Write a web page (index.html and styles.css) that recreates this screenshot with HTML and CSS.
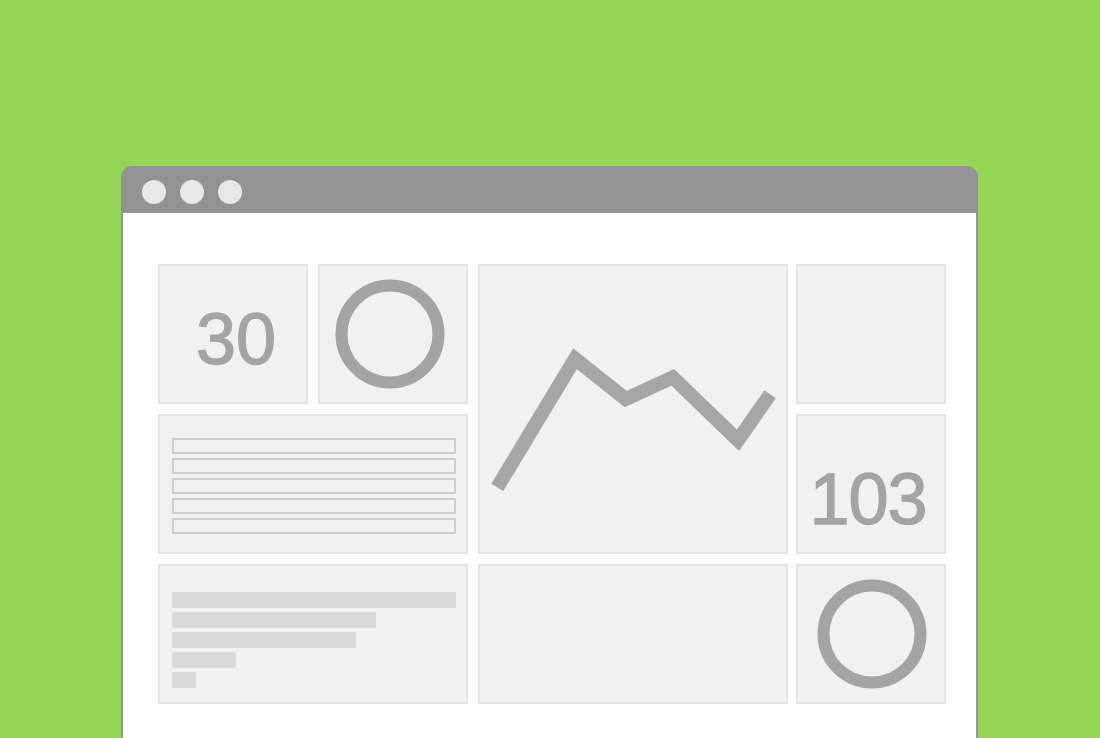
FILE: index.html
```html
<!DOCTYPE html>
<html>
<head>
<meta charset="utf-8">
<link rel="stylesheet" href="styles.css">
</head>
<body>
<div class="window">
  <div class="titlebar">
    <span class="dot"></span><span class="dot"></span><span class="dot"></span>
  </div>
  <div class="content">
    <div class="grid">
      <div class="cell stat stat-30"><span>30</span></div>
      <div class="cell ring-cell ring-a">
        <svg width="112" height="112" viewBox="0 0 112 112"><circle cx="56" cy="56" r="48.5" fill="none" stroke="#a4a4a4" stroke-width="12"/></svg>
      </div>
      <div class="cell chart">
        <svg width="306" height="286" viewBox="0 0 306 286"><polyline points="17.3,221.3 95,92.7 145.7,133 192.7,111.3 258,174.3 290,128.3" fill="none" stroke="#a6a6a6" stroke-width="14" stroke-linejoin="miter" stroke-miterlimit="10"/></svg>
      </div>
      <div class="cell empty-top"></div>
      <div class="cell table">
        <div class="row"></div>
        <div class="row"></div>
        <div class="row"></div>
        <div class="row"></div>
        <div class="row"></div>
      </div>
      <div class="cell stat stat-103"><span>103</span></div>
      <div class="cell bars">
        <div class="bar" style="width:284px"></div>
        <div class="bar" style="width:204px"></div>
        <div class="bar" style="width:184px"></div>
        <div class="bar" style="width:64px"></div>
        <div class="bar" style="width:24px"></div>
      </div>
      <div class="cell empty-bottom"></div>
      <div class="cell ring-cell ring-b">
        <svg width="112" height="112" viewBox="0 0 112 112"><circle cx="56" cy="56" r="48.5" fill="none" stroke="#a4a4a4" stroke-width="12"/></svg>
      </div>
    </div>
  </div>
</div>
</body>
</html>
```
FILE: styles.css
```css
html, body {
  margin: 0;
  padding: 0;
  height: 100%;
  overflow: hidden;
}
body {
  background: #95d555;
  font-family: "Liberation Sans", Arial, sans-serif;
}
.window {
  margin: 166px 0 0 121px;
  width: 853px;
  height: 572px;
  padding: 0 2px;
  background: #979797;
  border-radius: 11px 11px 0 0;
  display: flex;
  flex-direction: column;
  overflow: hidden;
}
.titlebar {
  height: 47px;
  box-sizing: border-box;
  flex: none;
  background: #939393;
  border-radius: 11px 11px 0 0;
  display: flex;
  align-items: flex-start;
  gap: 14px;
  margin: 0 -2px;
  padding: 14px 0 0 21px;
}
.titlebar .dot {
  width: 24px;
  height: 24px;
  border-radius: 50%;
  background: #e8e8e8;
}
.content {
  flex: 1;
  background: #ffffff;
  padding: 51px 0 0 35px;
}
.grid {
  display: grid;
  grid-template-columns: 150px 150px 308px 150px;
  grid-template-rows: 140px 140px 140px;
  column-gap: 10px;
  row-gap: 10px;
}
.cell {
  box-sizing: border-box;
  background: #f1f1f1;
  border: 2px solid #e5e5e5;
}
.stat-30 { grid-column: 1; grid-row: 1; }
.ring-a { grid-column: 2; grid-row: 1; }
.chart {
  grid-column: 3;
  grid-row: 1 / span 2;
  width: 310px;
}
.empty-top { grid-column: 4; grid-row: 1; }
.table { grid-column: 1 / span 2; grid-row: 2; }
.stat-103 { grid-column: 4; grid-row: 2; }
.bars { grid-column: 1 / span 2; grid-row: 3; }
.empty-bottom { grid-column: 3; grid-row: 3; width: 310px; }
.ring-b { grid-column: 4; grid-row: 3; }
.chart svg {
  display: block;
}
.stat {
  display: flex;
  align-items: center;
  justify-content: center;
  color: #a4a4a4;
  font-size: 72px;
  line-height: 1;
  -webkit-text-stroke: 1.3px #a4a4a4;
}
.stat-30 {
  padding: 10px 0 0 6px;
}
.stat-103 {
  padding: 30px 6px 0 0;
  letter-spacing: -1px;
}
.ring-cell {
  display: flex;
  align-items: center;
  justify-content: center;
}
.ring-a {
  padding-right: 6px;
}
.ring-b {
  padding-left: 2px;
}
.ring-cell svg {
  display: block;
}
.table {
  padding: 22px 10px 0 12px;
  display: flex;
  flex-direction: column;
  gap: 4px;
}
.table .row {
  height: 16px;
  box-sizing: border-box;
  border: 2px solid #cecece;
}
.bars {
  padding: 26px 0 0 12px;
  display: flex;
  flex-direction: column;
  gap: 4px;
}
.bars .bar {
  height: 16px;
  background: #d8d8d8;
}
```
